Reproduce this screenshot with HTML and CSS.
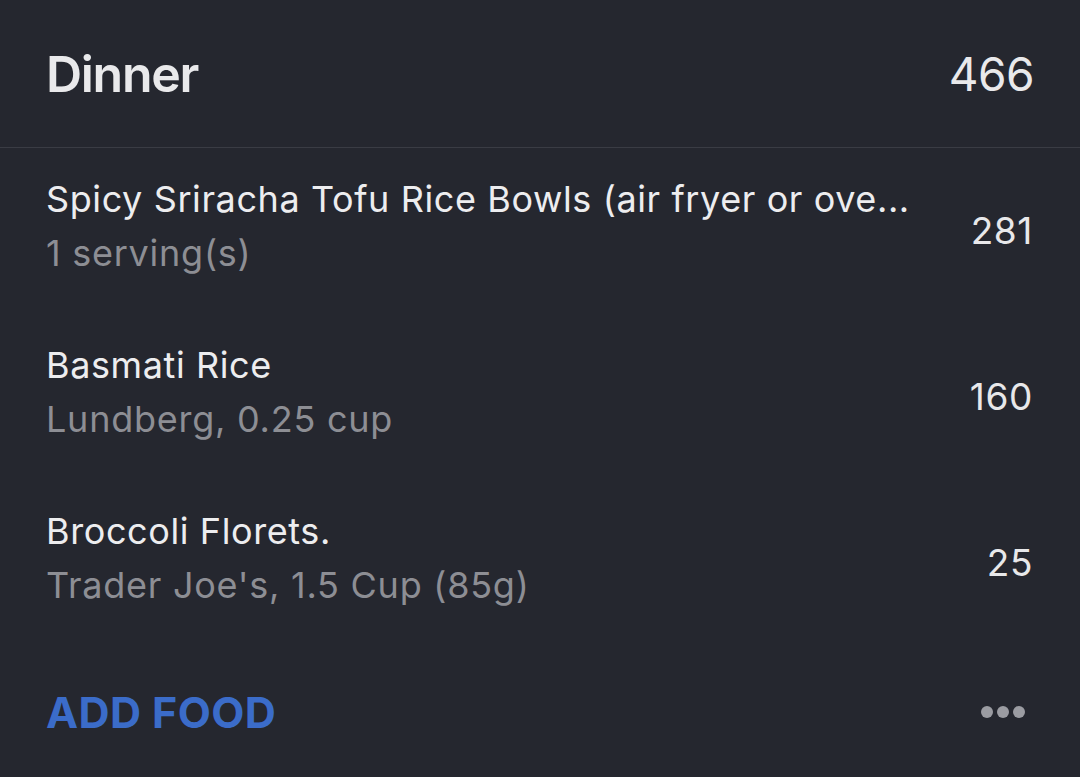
FILE: index.html
```html
<!DOCTYPE html>
<html>
<head>
<meta charset="utf-8">
<link rel="stylesheet" href="styles.css">
</head>
<body>
<div class="meal">
  <div class="meal-header">
    <div class="meal-title">Dinner</div>
    <div class="meal-total">466</div>
  </div>
  <div class="entries">
    <div class="entry">
      <div class="entry-info">
        <div class="entry-name">Spicy Sriracha Tofu Rice Bowls (air fryer or ove...</div>
        <div class="entry-detail">1 serving(s)</div>
      </div>
      <div class="entry-cal">281</div>
    </div>
    <div class="entry">
      <div class="entry-info">
        <div class="entry-name">Basmati Rice</div>
        <div class="entry-detail">Lundberg, 0.25 cup</div>
      </div>
      <div class="entry-cal">160</div>
    </div>
    <div class="entry">
      <div class="entry-info">
        <div class="entry-name">Broccoli Florets.</div>
        <div class="entry-detail">Trader Joe's, 1.5 Cup (85g)</div>
      </div>
      <div class="entry-cal">25</div>
    </div>
  </div>
  <div class="meal-footer">
    <div class="add-food">ADD FOOD</div>
    <div class="more"><span class="dot"></span><span class="dot"></span><span class="dot"></span></div>
  </div>
</div>
</body>
</html>
```

FILE: styles.css
```css
html, body {
  margin: 0;
  padding: 0;
  background: #25272f;
}
body {
  width: 1080px;
  height: 777px;
  overflow: hidden;
  font-family: Inter, "Liberation Sans", sans-serif;
  color: #e9e9eb;
}
.meal-header {
  height: 147px;
  display: flex;
  align-items: center;
  justify-content: space-between;
  padding: 0 46px 0 46px;
  border-bottom: 1px solid #3a3c44;
}
.meal-title {
  font-size: 50px;
  font-weight: 600;
  line-height: 60px;
  letter-spacing: -1.3px;
}
.meal-total {
  font-size: 46px;
  font-weight: 400;
  line-height: 60px;
  letter-spacing: -0.5px;
}
.entry {
  height: 166px;
  box-sizing: border-box;
  padding: 24px 47px 34px 46px;
  display: flex;
  align-items: center;
  justify-content: space-between;
}
.entry-info {
  display: flex;
  flex-direction: column;
}
.entry-name {
  font-size: 36px;
  line-height: 54px;
  white-space: nowrap;
  color: #ededef;
  letter-spacing: 0.6px;
}
.entry-detail {
  font-size: 36px;
  line-height: 54px;
  white-space: nowrap;
  color: #8d8e94;
  letter-spacing: 0.75px;
}
.entry-cal {
  font-size: 37px;
  line-height: 54px;
  padding-top: 10px;
  color: #e8e8ea;
  letter-spacing: 0.6px;
}
.meal-footer {
  height: 132px;
  display: flex;
  align-items: center;
  justify-content: space-between;
  padding: 0 55px 0 46px;
}
.add-food {
  font-size: 43px;
  font-weight: 700;
  color: #3b6cc9;
  letter-spacing: 0.4px;
  line-height: 56px;
}
.more {
  display: flex;
  gap: 4px;
}
.dot {
  width: 12px;
  height: 12px;
  border-radius: 50%;
  background: #9b9ca2;
}
```
